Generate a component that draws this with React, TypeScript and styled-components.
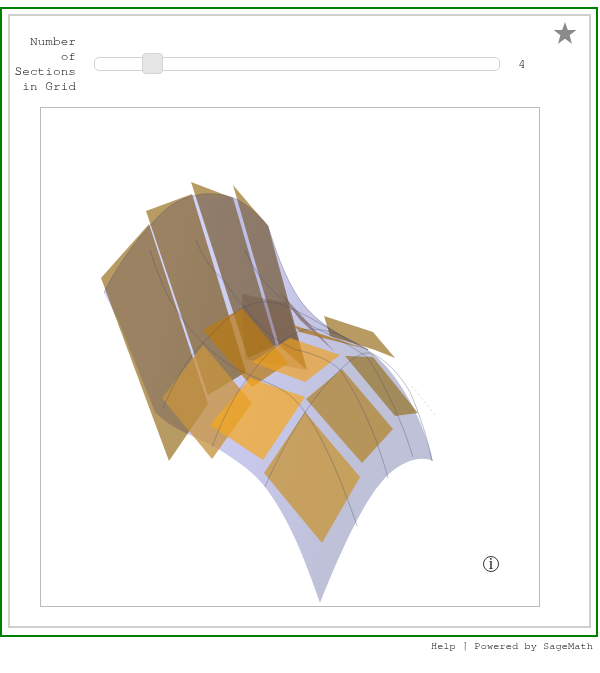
import React from "react";
import styled, { createGlobalStyle } from "styled-components";

const Global = createGlobalStyle`
  html, body { margin: 0; padding: 0; background: #fff; }
  body { font-family: "FreeMono", "Liberation Mono", monospace; }
`;

const Outer = styled.div`
  box-sizing: border-box;
  width: 598px;
  height: 630px;
  margin-top: 7px;
  border: 2px solid #008000;
  padding: 5px 5px 7px 6px;
`;

const Inner = styled.div`
  position: relative;
  box-sizing: border-box;
  height: 614px;
  border: 2px solid #cfcfcf;
`;

const Header = styled.div`
  display: flex;
  align-items: center;
  height: 60px;
  padding-top: 18px;
`;

const Label = styled.div`
  width: 66px;
  text-align: right;
  font-size: 12.8px;
  line-height: 15px;
  color: #000;
`;

const Track = styled.div`
  position: relative;
  box-sizing: border-box;
  width: 406px;
  height: 14px;
  margin-left: 18px;
  border: 1px solid #d3d3d3;
  border-radius: 5px;
  background: #fff;
`;

const Handle = styled.div`
  position: absolute;
  left: 47px;
  top: -5px;
  box-sizing: border-box;
  width: 21px;
  height: 21px;
  background: #e6e6e6;
  border: 1px solid #d3d3d3;
  border-radius: 4px;
`;

const Value = styled.div`
  margin-left: 18px;
  font-size: 12.8px;
  color: #000;
`;

const Star = styled.svg`
  position: absolute;
  top: 5px;
  right: 12px;
  width: 24px;
  height: 24px;
`;

const Plot = styled.div`
  position: relative;
  box-sizing: border-box;
  width: 500px;
  height: 500px;
  margin: 13px 0 0 30px;
  border: 1px solid #bbb;
`;

const Surface = styled.svg`
  display: block;
  width: 498px;
  height: 498px;
`;

const Info = styled.svg`
  position: absolute;
  right: 39px;
  bottom: 33px;
  width: 18px;
  height: 18px;
`;

const Footer = styled.div`
  padding: 3px 7px 0 0;
  text-align: right;
  font-size: 10.4px;
  line-height: 12px;
  color: #000;
`;

const surfacePath =
  "M104,293 C118,262 150,222 170,206 C190,192 218,190 238,200 C252,208 262,218 268,226 C274,245 283,275 300,300 C318,325 345,338 368,350 C395,368 422,415 433,461 C420,455 400,462 385,478 C360,505 335,565 320,603 C305,560 290,520 265,487 C250,468 232,458 215,447 C195,436 172,430 155,412 L118,320 Z";

const backPlanes = [
  "101,278 149,224 208,404 169,461",
  "146,211 192,194 246,372 208,395",
  "191,182 233,198 276,345 248,358",
  "233,185 268,226 307,370 279,345",
  "324,316 373,332 395,358 375,350 330,336",
];

const frontPlanes: { points: string; fill: string }[] = [
  { points: "242,294 287,303 307,370 245,359", fill: "rgba(105,70,50,.32)" },
  { points: "279,291 335,352 300,320", fill: "rgba(105,70,50,.5)" },
  { points: "162,398 203,345 252,403 212,459", fill: "rgba(199,148,64,.78)" },
  { points: "203,330 242,308 288,363 252,387", fill: "rgba(186,122,18,.72)" },
  { points: "210,425 250,378 305,397 263,460", fill: "rgba(246,167,28,.7)" },
  { points: "252,362 290,338 340,355 305,382", fill: "rgba(240,160,28,.66)" },
  { points: "264,473 305,412 360,477 322,543", fill: "rgba(201,146,41,.7)" },
  { points: "306,399 342,369 393,429 362,463", fill: "rgba(177,129,37,.7)" },
  { points: "345,356 373,357 418,413 395,416", fill: "rgba(151,114,38,.7)" },
  { points: "293,325 370,350 300,332", fill: "rgba(170,120,40,.8)" },
];

const gridLines = [
  "M265,487 C282,447 310,398 340,370 C352,358 362,352 370,353 C385,358 400,375 410,392 C420,415 428,440 432,461",
  "M212,447 C222,420 235,393 250,375 C265,355 282,338 300,331 C320,325 345,335 368,350",
  "M163,408 C175,380 188,358 203,343 C222,322 240,305 260,302 C280,300 300,312 337,333 C350,341 360,346 368,350",
  "M150,250 C158,275 165,290 170,300 C182,320 192,332 203,343 C215,355 225,362 233,367 C250,376 265,381 277,387 C290,394 298,402 305,412 C325,440 345,490 357,526",
  "M196,240 C205,262 214,272 224,280 C232,293 240,303 247,310 C256,322 265,331 273,337 C283,344 290,347 297,350 C312,353 330,360 340,370 C360,398 378,440 388,478",
  "M245,250 C250,262 256,272 263,280 C270,288 276,294 283,300 C292,310 300,318 307,323 C320,331 340,338 367,357 C380,375 402,420 413,457",
];

export default function App() {
  return (
    <>
      <Global />
      <Outer>
        <Inner>
          <Star viewBox="0 0 24 24">
            <polygon
              points="12,1 14.8,9 23.4,9.1 16.6,14.3 19,22.8 12,17.8 5,22.8 7.4,14.3 0.6,9.1 9.2,9"
              fill="#8a8a8a"
            />
          </Star>
          <Header>
            <Label>
              Number
              <br />
              of
              <br />
              Sections
              <br />
              in Grid
            </Label>
            <Track>
              <Handle />
            </Track>
            <Value>4</Value>
          </Header>
          <Plot>
            <Surface viewBox="41 108 498 498">
              <defs>
                <linearGradient id="lav" x1="0" y1="0" x2="1" y2="0.25">
                  <stop offset="0.2" stopColor="#d6d6fd" />
                  <stop offset="0.55" stopColor="#c8c8ec" />
                  <stop offset="0.85" stopColor="#bfc1d8" />
                </linearGradient>
              </defs>
              {backPlanes.map((p) => (
                <polygon key={p} points={p} fill="#b89b63" />
              ))}
              <path d={surfacePath} fill="url(#lav)" style={{ mixBlendMode: "multiply" }} />
              <polygon
                points="197,196 233,198 268,226 307,370 276,345 248,358"
                fill="rgba(110,110,165,.16)"
              />
              {frontPlanes.map((p) => (
                <polygon key={p.points} points={p.points} fill={p.fill} />
              ))}
              <g fill="none" stroke="rgba(70,75,110,.45)" strokeWidth="0.8">
                {gridLines.map((d) => (
                  <path key={d} d={d} />
                ))}
                <path d="M104,293 C118,262 150,222 170,206 C190,192 218,190 238,200 C252,208 262,218 268,226 C274,245 283,275 300,300 C318,325 345,338 368,350" />
              </g>
              <path
                d="M412,386 L436,416"
                stroke="#e8d6b8"
                strokeWidth="1"
                strokeDasharray="2 3"
                fill="none"
              />
            </Surface>
            <Info viewBox="0 0 18 18">
              <circle cx="9" cy="9" r="7.5" fill="none" stroke="#222" strokeWidth="0.9" />
              <text
                x="9"
                y="14"
                textAnchor="middle"
                fontFamily="Liberation Serif, serif"
                fontSize="16"
                fill="#111"
              >
                i
              </text>
            </Info>
          </Plot>
        </Inner>
      </Outer>
      <Footer>Help | Powered by SageMath</Footer>
    </>
  );
}
